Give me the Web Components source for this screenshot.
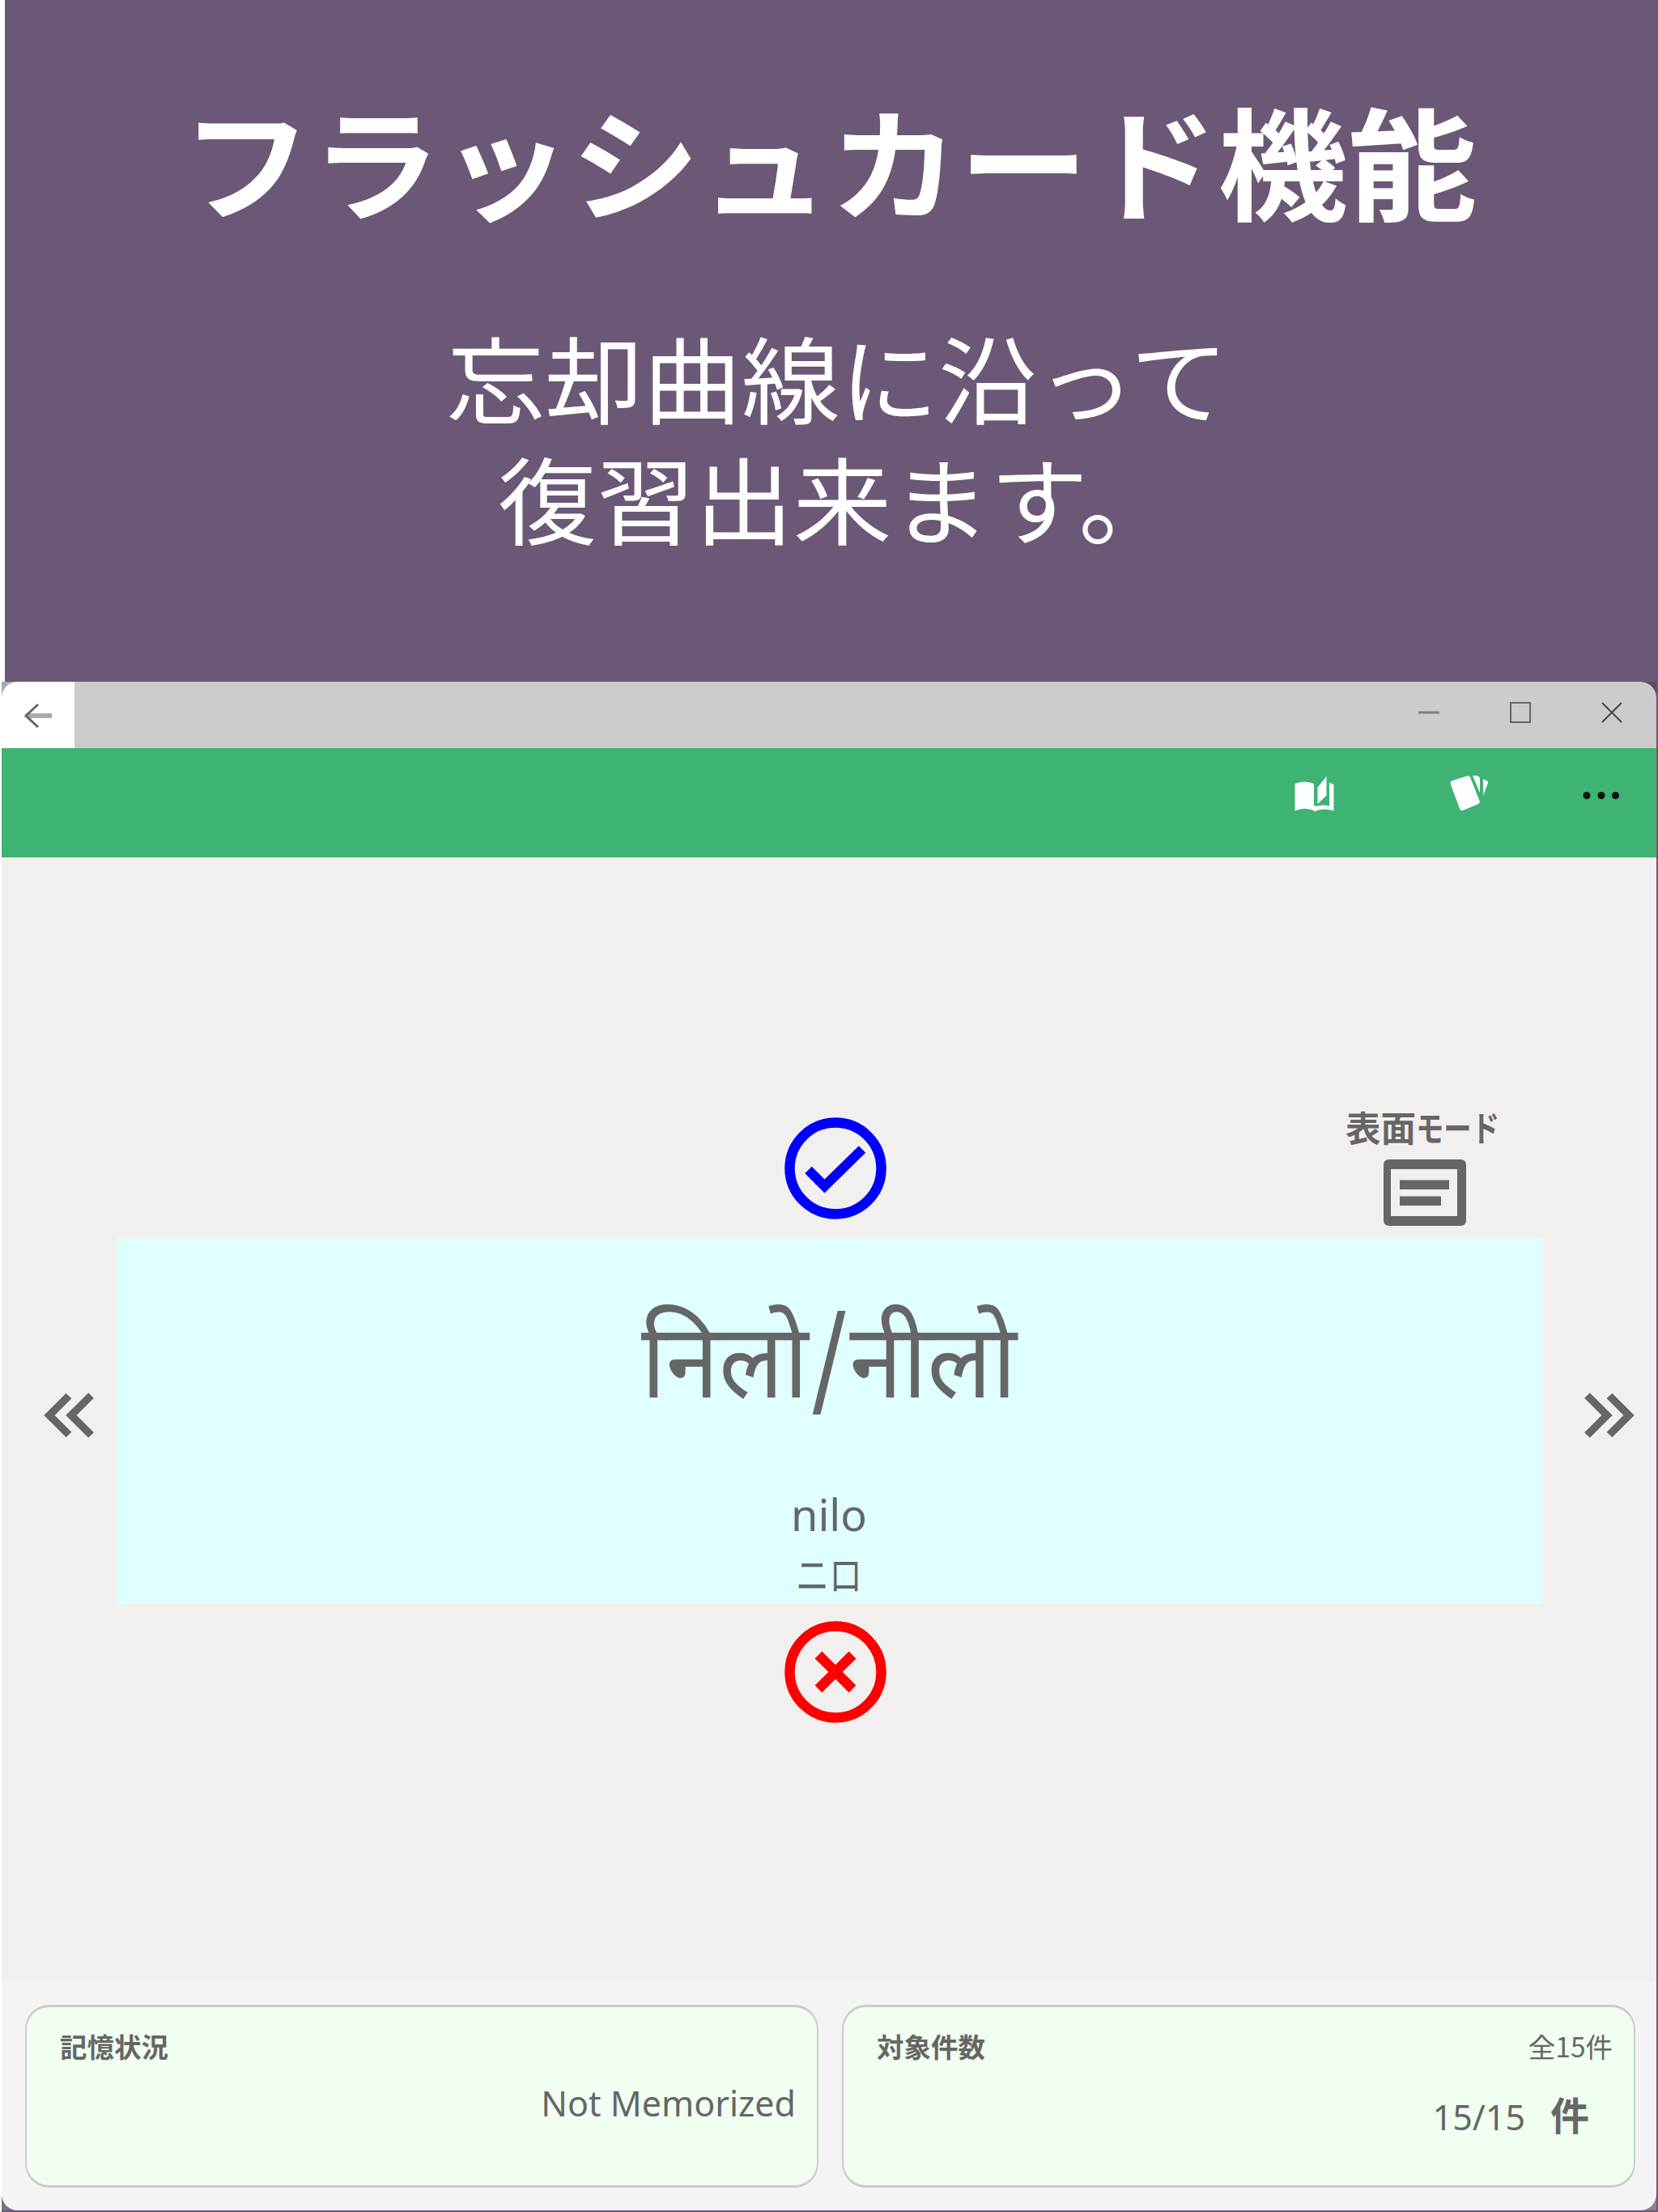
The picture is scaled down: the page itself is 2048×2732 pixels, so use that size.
<!DOCTYPE html>
<html lang="ja">
<head>
<meta charset="utf-8">
<title>フラッシュカード機能</title>
<style>
    html, body { margin: 0; padding: 0; }
    body {
        width: 2048px;
        height: 2732px;
        overflow: hidden;
        background: #6b5876;
        font-family: "Noto Sans CJK JP", sans-serif;
    }
</style>
</head>
<body>
<promo-page>
    <promo-header slot="header">
        <span slot="title">フラッシュカード機能</span>
        <span slot="line1">忘却曲線に沿って</span>
        <span slot="line2">復習出来ます。</span>
    </promo-header>
    <app-window>
        <title-bar></title-bar>
        <tool-bar></tool-bar>
        <flash-deck>
            <flash-card>
                <span slot="word">निलो/नीलो</span>
                <span slot="roman">nilo</span>
                <span slot="kana">ニロ</span>
            </flash-card>
        </flash-deck>
        <status-bar>
            <status-card>
                <span slot="label">記憶状況</span>
                <status-value>Not Memorized</status-value>
            </status-card>
            <status-card>
                <span slot="label">対象件数</span>
                <span slot="total">全15件</span>
                <status-value class="count">15/15<span slot="unit">件</span></status-value>
            </status-card>
        </status-bar>
    </app-window>
</promo-page>

<script>
function define(name, html) {
    customElements.define(name, class extends HTMLElement {
        constructor() {
            super();
            this.attachShadow({ mode: 'open' }).innerHTML = html;
        }
    });
}

define('promo-page', `
    <style>
        :host {
            display: flex;
            flex-direction: column;
            height: 2732px;
            /* white slivers on the left, then what shows behind the window's corners */
            background:
                linear-gradient(#fff, #fff) 0 0 / 6px 842px no-repeat,
                linear-gradient(#fff, #fff) 0 842px / 2px 1890px no-repeat,
                linear-gradient(#aaa, #aaa) 2px 842px / 20px 20px no-repeat,
                linear-gradient(#5c4a66, #5c4a66) 2026px 842px / 20px 20px no-repeat,
                linear-gradient(#6a7886, #6a7886) 2px 2710px / 20px 20px no-repeat,
                linear-gradient(#888, #888) 2026px 2710px / 20px 20px no-repeat,
                #6b5876;
        }
    </style>
    <slot name="header"></slot>
    <slot></slot>
`);

define('promo-header', `
    <style>
        :host {
            display: block;
            box-sizing: border-box;
            height: 842px;
            padding: 75px 0 0 10px;
            color: #fff;
            text-align: center;
            white-space: nowrap;
        }
        h1 { margin: 0 0 0 -9px; font-size: 160px; line-height: 240px; font-weight: 700; transform: scaleY(.94); }
        p { margin: 69px 0 0 11px; font-size: 121.5px; line-height: 155px; font-weight: 400; transform: scaleY(.96); }
        ::slotted([slot^="line"]) { display: block; }
    </style>
    <h1><slot name="title"></slot></h1>
    <p><slot name="line1"></slot><slot name="line2"></slot></p>
`);

define('app-window', `
    <style>
        :host {
            display: flex;
            flex-direction: column;
            width: 2044px;
            height: 1888px;
            margin-left: 2px;
            border-radius: 20px;
            overflow: hidden;
            color: #666;
        }
    </style>
    <slot></slot>
`);

define('title-bar', `
    <style>
        :host { display: flex; justify-content: space-between; height: 82px; background: #ccc; }
        .back { width: 90px; background: #fff; }
        svg { display: block; }
    </style>
    <div class="back">
        <svg width="90" height="82" fill="none" stroke-width="3">
            <path d="M62 42H30" stroke="#aaa" stroke-width="6"/>
            <path d="M45 28L30 42L45 56" stroke="#666"/>
        </svg>
    </div>
    <svg width="344" height="82" fill="none" stroke="#666" stroke-width="2">
        <path d="M50 38h26" stroke="#808080" stroke-width="3"/>
        <rect x="164" y="26" width="24" height="24"/>
        <path d="M277 26l24 24M301 26l-24 24" stroke="#444"/>
    </svg>
`);

define('tool-bar', `
    <style>
        :host { display: flex; justify-content: flex-end; height: 135px; background: #3eb373; }
        svg { display: block; }
    </style>
    <svg width="506" height="135" viewBox="1540 924 506 135" fill="#fff">
        <!-- book -->
        <path d="M1599.500 968Q1611 963 1623 968V995H1625V1002Q1612 996 1599.500 1001.500Z"/>
        <path d="M1627.500 972.500L1638.500 959V982.500L1627.500 993Z"/>
        <path d="M1642 966.500L1647.500 969V1001.500Q1634 997 1623 1002.500V996.500Q1634 993 1642 995.500Z"/>
        <!-- cards -->
        <path d="M1792 965.500Q1791 967 1792 969L1803 999Q1804.500 1002 1808 1000.500L1826 993Q1828.500 991.500 1827.500 989L1816 960Q1815 957.500 1812 958.500L1796 963.500Q1792.500 964.500 1792 965.500Z"/>
        <path d="M1819 958H1823.500Q1828 958.500 1828 963V979Z"/>
        <path d="M1832 962L1837 964.500Q1839 966 1837.500 968.500L1832 983Z"/>
        <!-- more -->
        <g fill="#0a140e">
            <circle cx="1960" cy="982.500" r="4.500"/>
            <circle cx="1978" cy="982.500" r="4.500"/>
            <circle cx="1995.500" cy="982.500" r="4.500"/>
        </g>
    </svg>
`);

define('round-mark', `
    <style>
        :host { display: block; width: 126px; height: 126px; color: blue; }
        :host([kind="ng"]) { color: red; }
        :host([kind="ok"]) .cross, :host([kind="ng"]) .tick { display: none; }
        svg { display: block; }
    </style>
    <svg width="126" height="126" fill="none" stroke="currentColor" stroke-width="12">
        <circle cx="63" cy="63" r="56.500" stroke-width="12.500"/>
        <path class="tick" d="M29.500 65L49.500 85L96 39.500"/>
        <path class="cross" d="M42 42L84 84M84 42L42 84" stroke-width="12.500"/>
    </svg>
`);

define('chevron-pair', `
    <style>
        :host { display: block; width: 64px; height: 56px; }
        :host([dir="next"]) { transform: scaleX(-1); }
        svg { display: block; }
    </style>
    <svg width="64" height="56" fill="none" stroke="#666" stroke-width="9.500">
        <path d="M32 4L8 28L32 52M59.500 3.500L35 28L59.500 52.500"/>
    </svg>
`);

define('side-mode', `
    <style>
        :host { display: flex; flex-direction: column; align-items: center; width: 200px; white-space: nowrap; }
        .text { display: flex; font-size: 43.500px; line-height: 52px; font-weight: 700; margin-left: -7px; }
        .kana { width: 101px; transform: scaleX(.79); transform-origin: 0 0; }
        svg { display: block; margin-top: 14px; }
    </style>
    <div class="text"><span>表面</span><span class="kana">モード</span></div>
    <svg width="102" height="82">
        <path fill="#666" fill-rule="evenodd" d="M7 0H95Q102 0 102 7V75Q102 82 95 82H7Q0 82 0 75V7Q0 0 7 0ZM9 12V70H91V12Z"/>
        <path fill="#666" d="M20 25.500H81V37H20ZM20 45.500H71V57H20Z"/>
    </svg>
`);

define('flash-card', `
    <style>
        :host {
            display: flex;
            flex-direction: column;
            align-items: center;
            height: 452px;
            background: #dfffff;
            white-space: nowrap;
        }
        .word {
            margin-top: 75px;
            font: 400 118px/180px "Noto Sans Devanagari", "Noto Sans", sans-serif;
            transform: scaleY(1.09);
        }
        .roman { margin-top: 49px; font: 400 54px/74px "Noto Sans", sans-serif; }
        .kana { font-size: 52px; line-height: 72px; transform: scaleX(.79); }
    </style>
    <div class="word"><slot name="word"></slot></div>
    <div class="roman"><slot name="roman"></slot></div>
    <div class="kana"><slot name="kana"></slot></div>
`);

define('flash-deck', `
    <style>
        :host {
            display: grid;
            grid-template-columns: 141.5px 1761px 141.5px;
            grid-template-rows: 470px 452px 1fr;
            height: 1388px;
            background: #f2f0ee;
        }
        .top { grid-column: 2; display: grid; grid-template-columns: 1fr 126px 1fr; align-items: end; padding-left: 15px; }
        .top round-mark { margin-bottom: 23px; }
        .top side-mode { justify-self: end; margin: 0 45px 15px 0; }
        .prev { grid-column: 1; grid-row: 2; padding: 191px 0 0 51px; }
        .next { grid-column: 3; grid-row: 2; padding: 191px 0 0 51px; }
        ::slotted(flash-card) { grid-column: 2; grid-row: 2; }
        .bottom { grid-column: 2; grid-row: 3; display: flex; justify-content: center; padding: 21px 0 0 15px; }
    </style>
    <div class="top">
        <span></span>
        <round-mark kind="ok"></round-mark>
        <side-mode></side-mode>
    </div>
    <div class="prev"><chevron-pair></chevron-pair></div>
    <slot></slot>
    <div class="next"><chevron-pair dir="next"></chevron-pair></div>
    <div class="bottom"><round-mark kind="ng"></round-mark></div>
`);

define('status-bar', `
    <style>
        :host {
            display: grid;
            grid-template-columns: 980px 980px;
            column-gap: 29px;
            box-sizing: border-box;
            height: 283px;
            padding: 29px 0 28px 29px;
            background: #f4f4f4;
        }
    </style>
    <slot></slot>
`);

define('status-card', `
    <style>
        :host {
            display: flex;
            flex-direction: column;
            box-sizing: border-box;
            padding: 23px 26px 0 41px;
            border: solid #ccc;
            border-width: 3px 2px;
            border-radius: 30px;
            background: #f0fff0;
        }
        .head { display: flex; justify-content: space-between; font-size: 33.500px; line-height: 50px; }
        .label { font-weight: 700; }
    </style>
    <div class="head">
        <span class="label"><slot name="label"></slot></span>
        <slot name="total"></slot>
    </div>
    <slot></slot>
`);

define('status-value', `
    <style>
        :host {
            display: flex;
            justify-content: flex-end;
            align-items: baseline;
            margin-top: 16px;
            font: 400 43px/60px "Noto Sans", sans-serif;
        }
        :host(.count) { margin: 28px 29px 0 0; }
        .unit { margin-left: 31px; font: 700 48px/60px "Noto Sans CJK JP", sans-serif; }
        :host(:not(.count)) .unit { display: none; }
    </style>
    <span><slot></slot></span>
    <span class="unit"><slot name="unit"></slot></span>
`);
</script>
</body>
</html>
